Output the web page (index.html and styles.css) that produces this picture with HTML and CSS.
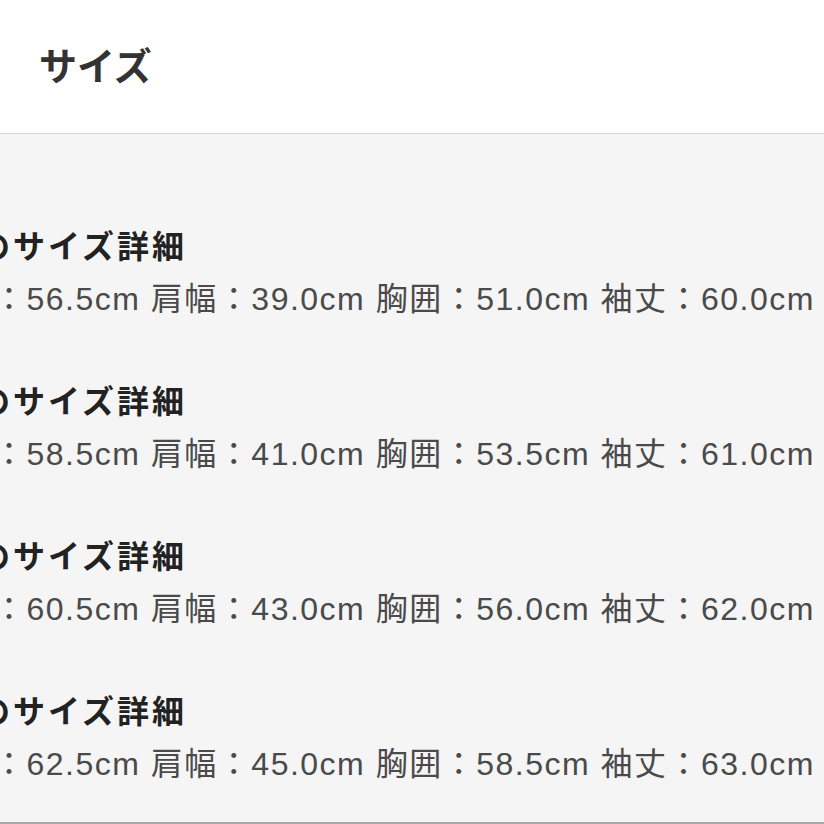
FILE: index.html
```html
<!DOCTYPE html>
<html lang="ja">
<head>
<meta charset="utf-8">
<title>サイズ</title>
<link rel="stylesheet" href="styles.css">
</head>
<body>
<div class="sheet">
  <header class="head">
    <h1 class="head-title">サイズ</h1>
  </header>
  <section class="body">
    <div class="list">
      <div class="row">
        <div class="row-title"><span class="size">S</span>のサイズ詳細</div>
        <div class="row-values">着丈：56.5cm 肩幅：39.0cm 胸囲：51.0cm 袖丈：60.0cm</div>
      </div>
      <div class="row">
        <div class="row-title"><span class="size">M</span>のサイズ詳細</div>
        <div class="row-values">着丈：58.5cm 肩幅：41.0cm 胸囲：53.5cm 袖丈：61.0cm</div>
      </div>
      <div class="row">
        <div class="row-title"><span class="size">L</span>のサイズ詳細</div>
        <div class="row-values">着丈：60.5cm 肩幅：43.0cm 胸囲：56.0cm 袖丈：62.0cm</div>
      </div>
      <div class="row">
        <div class="row-title"><span class="size">XL</span>のサイズ詳細</div>
        <div class="row-values">着丈：62.5cm 肩幅：45.0cm 胸囲：58.5cm 袖丈：63.0cm</div>
      </div>
    </div>
  </section>
</div>
</body>
</html>
```

FILE: styles.css
```css
html, body {
  margin: 0;
  padding: 0;
  background: #f5f5f5;
}

body {
  font-family: "Liberation Sans", "Noto Sans CJK JP", sans-serif;
  width: 824px;
  height: 824px;
  overflow: hidden;
}

.sheet {
  width: 824px;
  height: 824px;
  overflow: hidden;
  display: flex;
  flex-direction: column;
}

.head {
  height: 133px;
  background: #ffffff;
  border-bottom: 1px solid #d4d4d4;
  box-shadow: 0 1px 2px rgba(0, 0, 0, 0.07);
  display: flex;
  align-items: center;
  padding-left: 39px;
  flex-shrink: 0;
}

.head-title {
  margin: 0;
  font-size: 38px;
  font-weight: 700;
  color: #333333;
  letter-spacing: 0;
  line-height: 1;
}

.body {
  flex: 1;
  background: #f5f5f5;
  border-bottom: 2px solid #a9a9a9;
  padding-top: 89px;
}

.list {
  margin-left: -74px;
  display: flex;
  flex-direction: column;
  gap: 51px;
  white-space: nowrap;
}

.row-title {
  font-size: 32px;
  font-weight: 700;
  color: #222222;
  letter-spacing: 3px;
  line-height: 48px;
}

.size {
  display: inline-block;
  width: 52px;
  text-align: right;
  letter-spacing: 0;
}

.row-values {
  font-size: 32px;
  color: #4a4a4a;
  letter-spacing: 1.5px;
  line-height: 56px;
}
```
